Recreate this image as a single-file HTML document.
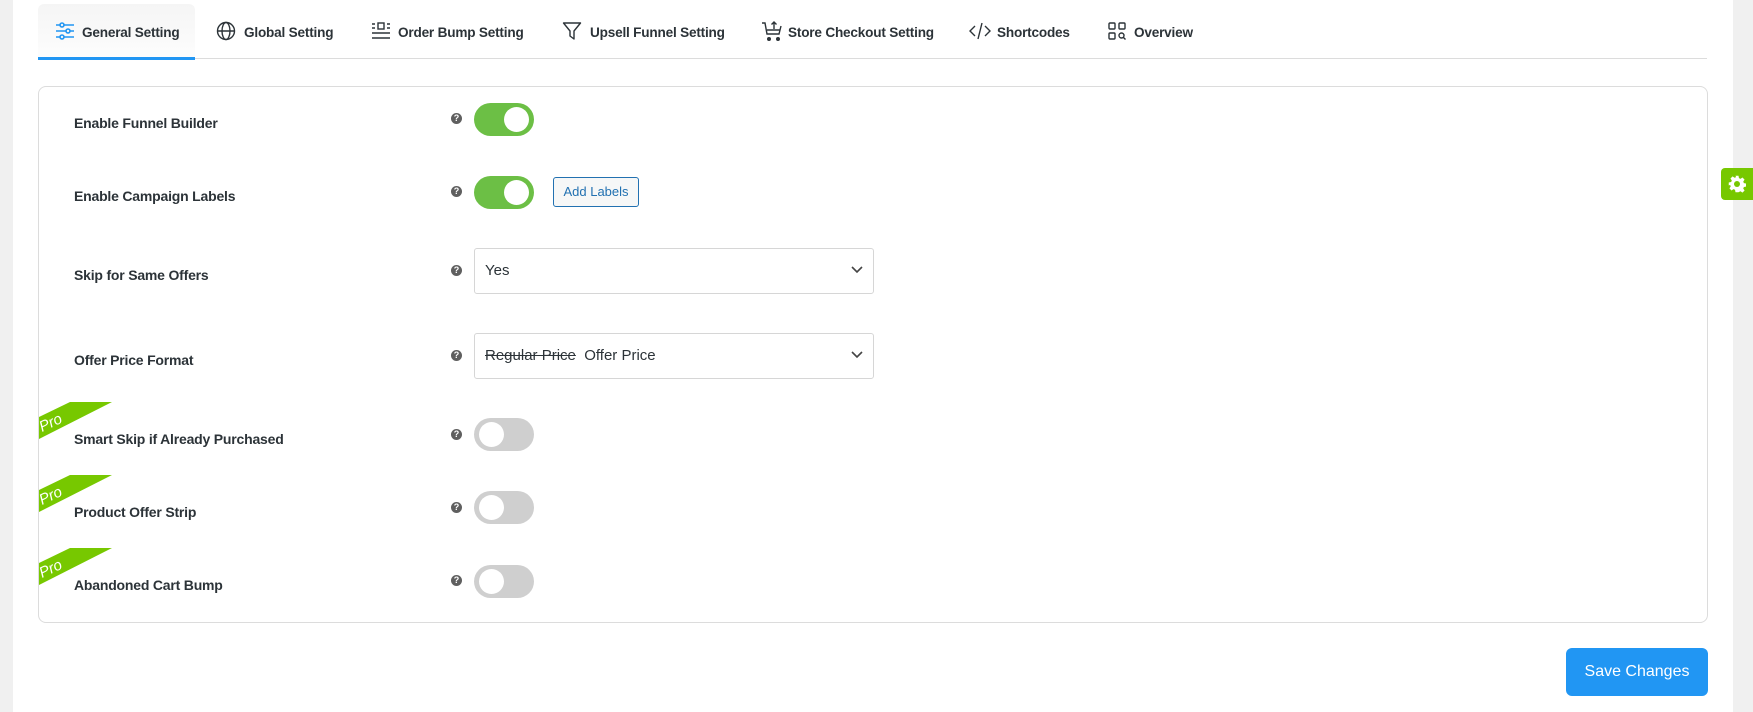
<!DOCTYPE html>
<html><head><meta charset="utf-8"><style>
*{box-sizing:border-box;margin:0;padding:0}
body{width:1753px;height:712px;background:#fff;font-family:"Liberation Sans",sans-serif;color:#2c3338;position:relative;overflow:hidden}
.abs{position:absolute}
.tab{position:absolute;top:22px;height:20px;display:flex;align-items:center;font-size:13.6px;font-weight:bold;color:#2c3338;letter-spacing:-0.2px}
.lbl{position:absolute;left:74px;font-size:14px;font-weight:bold;color:#2c3338;letter-spacing:-0.2px;transform:translateY(-50%)}
.help{position:absolute;left:451px;width:11px;height:11px;border-radius:50%;background:#5f5f5f;color:#fff;font-size:9px;font-weight:bold;line-height:11px;text-align:center}
.tg{position:absolute;left:474px;width:60px;height:33px;border-radius:17px;background:#6cbf45}
.tg::after{content:"";position:absolute;right:5px;top:4px;width:25px;height:25px;border-radius:50%;background:#fff}
.tg.off{background:#cfcfcf}
.tg.off::after{left:5px;right:auto}
.sel{position:absolute;left:474px;width:400px;height:46px;border:1px solid #d6d6d6;border-radius:3px;font-size:15px;color:#2c3338;padding-left:10px;line-height:44px}
.sel svg{position:absolute;right:10px;top:17px}
.pro{position:absolute;left:39px;width:73px;height:38px}
</style></head><body>
<div class="abs" style="left:0;top:0;width:13px;height:712px;background:#f0f0f0"></div>
<div class="abs" style="left:1733px;top:0;width:20px;height:712px;background:#f0f0f0"></div>
<div class="abs" style="left:1721px;top:168px;width:32px;height:32px;background:#77c800;border-radius:4px 0 0 4px"></div>
<svg class="abs" style="left:1728px;top:175px" width="18" height="18" viewBox="0 0 24 24"><path fill="#fff" d="M10 1h4l.6 3.2 2 .9 2.7-1.8 2.8 2.8-1.8 2.7.9 2 3.2.6v4l-3.2.6-.9 2 1.8 2.7-2.8 2.8-2.7-1.8-2 .9L14 23h-4l-.6-3.2-2-.9-2.7 1.8-2.8-2.8 1.8-2.7-.9-2L1 14v-4l3.2-.6.9-2-1.8-2.7 2.8-2.8 2.7 1.8 2-.9z"/><circle cx="12" cy="12" r="4" fill="#77c800"/></svg>

<div class="abs" style="left:38px;top:4px;width:157px;height:55px;background:linear-gradient(#f5f5f5,#fdfdfd);border-radius:6px 6px 0 0"></div>
<div class="abs" style="left:38px;top:58px;width:1669px;height:1px;background:#dcdcdc"></div>
<div class="abs" style="left:38px;top:57px;width:157px;height:3px;background:#2196f3"></div>

<svg class="abs" style="left:55px;top:22px" width="20" height="18" viewBox="0 0 20 18" fill="none" stroke="#2196f3" stroke-width="1.6"><path d="M1 3h18M1 9h18M1 15h18"/><circle cx="7" cy="3" r="2" fill="#f5f5f5"/><circle cx="13" cy="9" r="2" fill="#f5f5f5"/><circle cx="7" cy="15" r="2" fill="#f5f5f5"/></svg>
<div class="tab" style="left:82px">General Setting</div>

<svg class="abs" style="left:216px;top:21px" width="20" height="20" viewBox="0 0 20 20" fill="none" stroke="#2c3338" stroke-width="1.4"><circle cx="10" cy="10" r="8.5"/><ellipse cx="10" cy="10" rx="4" ry="8.5"/><path d="M1.5 10h17"/></svg>
<div class="tab" style="left:244px">Global Setting</div>

<svg class="abs" style="left:371px;top:21px" width="20" height="20" viewBox="0 0 20 20" fill="none" stroke="#2c3338" stroke-width="1.4"><rect x="7" y="2" width="6" height="6"/><path d="M1 3h3M1 7h3M16 3h3M16 7h3M1 12h18M1 17h18"/></svg>
<div class="tab" style="left:398px">Order Bump Setting</div>

<svg class="abs" style="left:562px;top:21px" width="20" height="20" viewBox="0 0 20 20" fill="none" stroke="#2c3338" stroke-width="1.4" stroke-linejoin="round"><path d="M1.5 2h17l-6.5 8v8l-4-3v-5z"/></svg>
<div class="tab" style="left:590px">Upsell Funnel Setting</div>

<svg class="abs" style="left:761px;top:20px" width="22" height="22" viewBox="0 0 22 22" fill="none" stroke="#2c3338" stroke-width="1.4"><path d="M1 3h3l2 11h12l2-8M13 9V2M10.5 4.5L13 2l2.5 2.5M6 10h13"/><circle cx="8" cy="19" r="1.3" fill="#2c3338"/><circle cx="17" cy="19" r="1.3" fill="#2c3338"/></svg>
<div class="tab" style="left:788px">Store Checkout Setting</div>

<svg class="abs" style="left:969px;top:21px" width="22" height="20" viewBox="0 0 22 20" fill="none" stroke="#2c3338" stroke-width="1.4"><path d="M6 5l-5 5 5 5M16 5l5 5-5 5M13 2l-4 16"/></svg>
<div class="tab" style="left:997px">Shortcodes</div>

<svg class="abs" style="left:1107px;top:21px" width="20" height="20" viewBox="0 0 20 20" fill="none" stroke="#2c3338" stroke-width="1.4"><rect x="2" y="2" width="6" height="6" rx="1"/><rect x="12" y="2" width="6" height="6" rx="1"/><rect x="2" y="12" width="6" height="6" rx="1"/><circle cx="14.5" cy="14.5" r="2.5"/><path d="M16.5 16.5l2 2"/></svg>
<div class="tab" style="left:1134px">Overview</div>

<div class="abs" style="left:38px;top:86px;width:1670px;height:537px;border:1px solid #dcdcdc;border-radius:8px"></div>

<div class="lbl" style="top:123px">Enable Funnel Builder</div>
<div class="help" style="top:113px">?</div>
<div class="tg" style="top:103px"></div>

<div class="lbl" style="top:196px">Enable Campaign Labels</div>
<div class="help" style="top:186px">?</div>
<div class="tg" style="top:176px"></div>
<div class="abs" style="left:553px;top:177px;width:86px;height:30px;border:1px solid #2271b1;border-radius:3px;background:#f6f7f7;color:#2271b1;font-size:13px;text-align:center;line-height:28px">Add Labels</div>

<div class="lbl" style="top:275px">Skip for Same Offers</div>
<div class="help" style="top:265px">?</div>
<div class="sel" style="top:248px">Yes<svg width="12" height="8" viewBox="0 0 12 8" fill="none" stroke="#444" stroke-width="1.6"><path d="M1 1l5 5 5-5"/></svg></div>

<div class="lbl" style="top:360px">Offer Price Format</div>
<div class="help" style="top:350px">?</div>
<div class="sel" style="top:333px"><span style="text-decoration:line-through">Regular Price</span>&nbsp; Offer Price<svg width="12" height="8" viewBox="0 0 12 8" fill="none" stroke="#444" stroke-width="1.6"><path d="M1 1l5 5 5-5"/></svg></div>

<svg class="pro" style="top:402px" viewBox="0 0 73 38"><polygon points="31,0 73,0 0,37 0,15" fill="#77c800"/><text x="3" y="30" transform="rotate(-25 3 30)" fill="#fff" font-family="Liberation Sans" font-style="italic" font-size="15">Pro</text></svg>
<div class="lbl" style="top:439px">Smart Skip if Already Purchased</div>
<div class="help" style="top:429px">?</div>
<div class="tg off" style="top:418px"></div>

<svg class="pro" style="top:475px" viewBox="0 0 73 38"><polygon points="31,0 73,0 0,37 0,15" fill="#77c800"/><text x="3" y="30" transform="rotate(-25 3 30)" fill="#fff" font-family="Liberation Sans" font-style="italic" font-size="15">Pro</text></svg>
<div class="lbl" style="top:512px">Product Offer Strip</div>
<div class="help" style="top:502px">?</div>
<div class="tg off" style="top:491px"></div>

<svg class="pro" style="top:548px" viewBox="0 0 73 38"><polygon points="31,0 73,0 0,37 0,15" fill="#77c800"/><text x="3" y="30" transform="rotate(-25 3 30)" fill="#fff" font-family="Liberation Sans" font-style="italic" font-size="15">Pro</text></svg>
<div class="lbl" style="top:585px">Abandoned Cart Bump</div>
<div class="help" style="top:575px">?</div>
<div class="tg off" style="top:565px"></div>

<div class="abs" style="left:1566px;top:648px;width:142px;height:48px;background:#2196f3;border-radius:6px;color:#fff;font-size:16px;text-align:center;line-height:48px">Save Changes</div>
</body></html>
